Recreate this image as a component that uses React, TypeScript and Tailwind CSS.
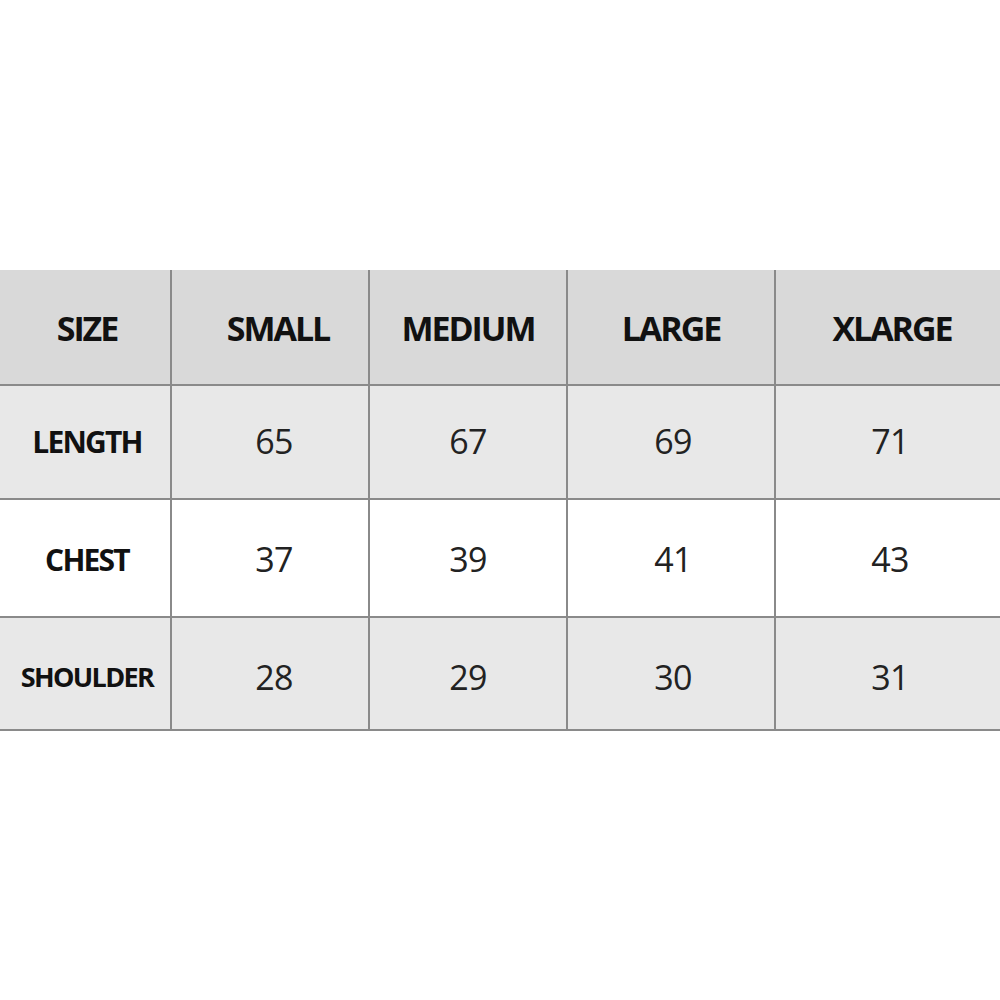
const sizes = [
  { label: "SIZE", pad: "pl-1" },
  { label: "SMALL", pad: "pl-4" },
  { label: "MEDIUM", pad: "" },
  { label: "LARGE", pad: "" },
  { label: "XLARGE", pad: "pl-2" },
];

const valuePads = ["pl-2", "", "pl-1", "pl-1"];

const rows = [
  { label: "LENGTH", values: [65, 67, 69, 71], bg: "bg-[#e8e8e8]", h: "h-[114px]", shift: "pt-0", labelCls: "text-[30px]" },
  { label: "CHEST", values: [37, 39, 41, 43], bg: "bg-white", h: "h-[118px]", shift: "pt-1", labelCls: "text-[30px]" },
  { label: "SHOULDER", values: [28, 29, 30, 31], bg: "bg-[#e8e8e8]", h: "h-[113px]", shift: "pt-2", labelCls: "text-[27px]" },
];

const cols = "grid grid-cols-[172px_198px_198px_208px_1fr]";

export default function App() {
  return (
    <div className="h-[1000px] w-[1000px] bg-white flex items-center font-['Open_Sans',sans-serif]">
      <div className="w-full">
        <div className={`${cols} h-[116px] bg-[#d9d9d9] border-b-2 border-[#8a8a8a]`}>
          {sizes.map((s, i) => (
            <div
              key={s.label}
              className={`flex items-center justify-center pt-1 text-[34px] font-bold tracking-[-0.06em] text-[#111] ${s.pad} ${
                i < sizes.length - 1 ? "border-r-2 border-[#8a8a8a]" : ""
              }`}
            >
              {s.label}
            </div>
          ))}
        </div>
        {rows.map((r) => (
          <div key={r.label} className={`${cols} ${r.h} ${r.bg} border-b-2 border-[#8a8a8a]`}>
            <div
              className={`flex items-center justify-center pl-1 ${r.shift} border-r-2 border-[#8a8a8a] font-bold tracking-[-0.06em] text-[#111] ${r.labelCls}`}
            >
              {r.label}
            </div>
            {r.values.map((v, i) => (
              <div
                key={i}
                className={`flex items-center justify-center ${r.shift} text-[34px] tracking-[-0.02em] text-[#222] ${valuePads[i]} ${
                  i < r.values.length - 1 ? "border-r-2 border-[#8a8a8a]" : ""
                }`}
              >
                {v}
              </div>
            ))}
          </div>
        ))}
      </div>
    </div>
  );
}
